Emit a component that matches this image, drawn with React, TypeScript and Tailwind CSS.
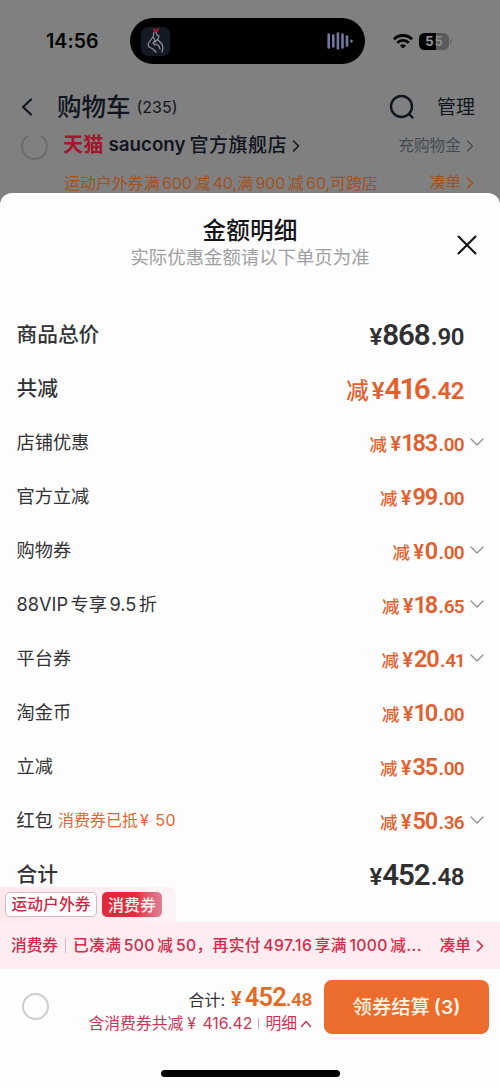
import clsx from "clsx";

type Row = {
  label: string;
  note?: boolean;
  whole: string;
  cents: string;
  discount?: boolean;
  large?: boolean;
  expandable?: boolean;
};

const rows: Row[] = [
  { label: "商品总价", whole: "868", cents: "90", large: true },
  { label: "共减", whole: "416", cents: "42", large: true, discount: true },
  { label: "店铺优惠", whole: "183", cents: "00", discount: true, expandable: true },
  { label: "官方立减", whole: "99", cents: "00", discount: true },
  { label: "购物券", whole: "0", cents: "00", discount: true, expandable: true },
  { label: "88VIP专享9.5折", whole: "18", cents: "65", discount: true, expandable: true },
  { label: "平台券", whole: "20", cents: "41", discount: true, expandable: true },
  { label: "淘金币", whole: "10", cents: "00", discount: true },
  { label: "立减", whole: "35", cents: "00", discount: true },
  { label: "红包", note: true, whole: "50", cents: "36", discount: true, expandable: true },
  { label: "合计", whole: "452", cents: "48", large: true },
];

type ChevronProps = { d: string; className: string; box: string; width?: number };

function Chevron({ d, className, box, width = 1.6 }: ChevronProps) {
  return (
    <svg viewBox={box} className={className} fill="none" stroke="currentColor" strokeWidth={width} strokeLinecap="round" strokeLinejoin="round">
      <path d={d} />
    </svg>
  );
}

// Adds a small gap wherever Chinese text meets digits or latin letters.
function Mixed({ text }: { text: string }) {
  const parts = text.split(/([0-9A-Za-z.]*[0-9A-Za-z])/).filter(Boolean);
  return (
    <>
      {parts.map((part, index) => (
        <span
          key={index}
          className={clsx(
            /^[0-9A-Za-z]/.test(part) && index > 0 && "ml-[2.5px]",
            /^[0-9A-Za-z]/.test(part) && index < parts.length - 1 && !/^[,，]/.test(parts[index + 1]) && "mr-[2.5px]"
          )}
        >
          {part}
        </span>
      ))}
    </>
  );
}

// The figure 1 is set tighter than the other digits.
function Digits({ value }: { value: string }) {
  return (
    <>
      {value.split("").map((digit, index) => (
        <span key={index} className={digit === "1" ? "-ml-[0.03em] -mr-[0.05em]" : undefined}>
          {digit}
        </span>
      ))}
    </>
  );
}

function StatusBar() {
  return (
    <div className="flex h-[82px] items-center pl-[46px] text-black">
      <span className="w-[84px] pt-px text-[19.5px] font-semibold leading-none tracking-[0.1px]">14:56</span>
      <div className="flex h-[46px] w-[235px] items-center justify-between rounded-full bg-black pl-[11px] pr-[12px]">
        <div className="flex size-[29px] items-center justify-center rounded-[7px] bg-[#151925]">
          <svg viewBox="0 0 29 29" className="size-[29px]" fill="none" strokeLinecap="round" strokeLinejoin="round">
            <path
              d="M13 5l-1 5-3 4-2 3 1 3 4 2 3 3M15 5l1 3 2 1-1 3M12 10l2 3-2 3 2 2M17 12l-3 3M17 13l4 4 1 4-1 4M15 17l3 2 1 3"
              stroke="#90939a"
              strokeWidth="1.2"
            />
            <path d="M13 2.500l1.500 2 2.500-2" stroke="#9c1f2b" strokeWidth="2.4" />
          </svg>
        </div>
        <svg viewBox="0 0 26 18" className="h-[18px] w-[26px]" stroke="#7378a0" strokeWidth="2.600" strokeLinecap="round">
          <path d="M1.700 2.500v13M6.300 3.500v11M10.900 1.500v15M15.500 2.500v13M20 4.500v9M24.500 8.700v.6" />
        </svg>
      </div>
      <svg viewBox="0 0 20 15" className="ml-[28px] h-[15px] w-[20px]" fill="none" stroke="currentColor" strokeWidth="2.800">
        <path d="M1 5.200a12.800 12.800 0 0 1 18 0M4.300 8.700a8 8 0 0 1 11.400 0" />
        <path d="M10 14.600l-3-3a4.300 4.300 0 0 1 6 0z" fill="currentColor" stroke="none" />
      </svg>
      <div className="ml-[6px] flex h-[17px] w-[30px] items-center justify-center gap-[1px] rounded-[5.5px] bg-linear-to-r from-black from-55% to-[#5a5a5a] to-55% text-[13px] font-bold leading-none">
        <span className="text-[#9a9a9a]">5</span>
        <span className="text-[#8c8c8c]">5</span>
      </div>
      <div className="ml-px h-[5px] w-[1.500px] rounded-r bg-[#696969]" />
    </div>
  );
}

function CartHeader() {
  return (
    <div className="h-[193px] overflow-hidden bg-[#808080] text-[#111520]">
      <StatusBar />
      <div className="flex h-[50px] items-center pl-[21px] pr-[25px]">
        <Chevron box="0 0 12 18" d="M10 1.500L2 9l8 7.500" className="h-[18px] w-[12px]" width={2.2} />
        <h1 className="ml-[24px] text-[24.500px] font-medium leading-none">购物车</h1>
        <span className="ml-[6px] text-[16px] leading-none">(235)</span>
        <svg viewBox="0 0 26 26" className="ml-auto size-[26px]" fill="none" stroke="currentColor" strokeWidth="2.400" strokeLinecap="round">
          <circle cx="12.500" cy="12.500" r="10.500" />
          <path d="M20 20l3.500 3.500" />
        </svg>
        <span className="ml-[22px] text-[19px] leading-none">管理</span>
      </div>
      <div className="-mt-px flex h-[29px] items-center pl-[21px] pr-[26px]">
        <div className="mt-[5px] flex h-[24px] items-center overflow-hidden pb-[4px]">
          <span className="size-[27px] shrink-0 rounded-full border-[2.500px] border-[#6b6c70]" />
        </div>
        <span className="ml-[15px] text-[20.200px] font-bold leading-none text-[#a5152c]">天猫</span>
        <span className="ml-[5px] text-[18.800px] font-semibold leading-none">saucony</span>
        <span className="ml-[4px] text-[19px] font-medium leading-none tracking-[0.5px]">官方旗舰店</span>
        <Chevron box="0 0 8 12" d="M1.500 1l5 5-5 5" className="ml-[5px] h-[12px] w-[8px]" />
        <span className="ml-auto text-[15.700px] leading-none text-[#444a55]">充购物金</span>
        <Chevron box="0 0 8 12" d="M1.500 1l5 5-5 5" className="ml-[5px] h-[12px] w-[8px] text-[#444a55]" width={1.2} />
      </div>
      <div className="flex h-[46px] items-center pl-[64px] pr-[26px] text-[16px] leading-none text-[#a1521f]">
        <span className="whitespace-nowrap tracking-[-0.100px]">
          <Mixed text="运动户外券满600减40,满900减60,可跨店" />
        </span>
        <span className="ml-auto text-[15.500px]">凑单</span>
        <Chevron box="0 0 8 12" d="M1.500 1l5 5-5 5" className="ml-[5px] h-[12px] w-[8px]" />
      </div>
    </div>
  );
}

function Price({ whole, cents, large, discount }: Row) {
  return (
    <div
      className={clsx(
        "flex items-baseline font-['Roboto','Noto_Sans_CJK_SC',sans-serif] leading-none font-semibold",
        discount ? "text-[#e2602e]" : "text-[#303033]"
      )}
    >
      {discount ? (
        <span className={large ? "mr-[3px] text-[22.500px] font-medium" : "mr-[3.500px] text-[17.500px] font-medium"}>减</span>
      ) : null}
      <span className={large ? "text-[24px]" : "mr-px text-[19.500px]"}>¥</span>
      <span className={large ? "text-[29.500px] tracking-[-1.100px]" : "text-[23.500px] tracking-[-1px]"}>
        <Digits value={whole} />
      </span>
      <span className={large ? "text-[24px] tracking-[-0.5px]" : "text-[19px] tracking-[-0.7px]"}>
        <span className="mr-[0.5px] ml-[1.200px]">.</span>
        <Digits value={cents} />
      </span>
    </div>
  );
}

function DetailRow(row: Row) {
  return (
    <li className="flex h-[54px] items-center pl-[16.500px]">
      <span
        className={clsx(
          "leading-none text-[#333336]",
          row.large ? "pt-[2px] text-[20.700px] font-medium" : "text-[18.200px]"
        )}
      >
        <Mixed text={row.label} />
      </span>
      {row.note ? (
        <span className="ml-[5px] text-[16px] leading-none text-[#e2652f]">
          消费券已抵<span className="ml-[2px] mr-[2px]">¥</span> <span className="tracking-[0.500px]">50</span>
        </span>
      ) : null}
      <div className="ml-auto pt-[3px]">
        <Price {...row} />
      </div>
      <div className="w-[36px] pl-[6px]">
        {row.expandable ? (
          <Chevron box="0 0 14 8" d="M1 1l6 6 6-6" className="h-[8px] w-[14px] text-[#8e8e93]" width={1.3} />
        ) : null}
      </div>
    </li>
  );
}

function CouponBar() {
  return (
    <div className="relative -mt-[14px] shrink-0">
      <div className="flex h-[35px] w-[176px] items-center gap-[5px] rounded-tr-[7px] bg-linear-to-r from-[#fde8ec] to-[#fdf2f4] pl-[5px] leading-none">
        <span className="flex h-[25px] w-[92px] items-center justify-center rounded-[5px] border border-[#dcb6c5] bg-white text-[15.800px] font-medium text-[#cf2744]">
          运动户外券
        </span>
        <span className="flex h-[25px] w-[60px] items-center justify-center rounded-[5px] bg-linear-to-r from-[#e02a3c] from-55% to-[#df7f98] text-[16px] font-medium text-[#fff0f0]">
          消费券
        </span>
      </div>
      <div className="flex h-[47px] items-center bg-[#fdedf0] pl-[11px] pr-[16px] text-[15.700px] font-medium leading-none text-[#d42a49]">
        <span>消费券</span>
        <span className="mx-[7px] h-[15px] w-px bg-[#e2b5c0]" />
        <span className="whitespace-nowrap tracking-[0.380px]">
          <Mixed text="已凑满500减50，再实付497.16享满1000减..." />
        </span>
        <span className="ml-auto">凑单</span>
        <Chevron box="0 0 8 12" d="M1.500 1l5 5-5 5" className="ml-[5px] h-[12px] w-[8px]" />
      </div>
    </div>
  );
}

function CheckoutBar() {
  return (
    <footer className="flex h-[118px] flex-col bg-[#fdfdfd]">
      <div className="flex items-start pl-[21.500px] pt-[11px]">
        <span className="mt-[13px] size-[27px] rounded-full border-[2.500px] border-[#ccccd1]" />
        <div className="ml-auto mr-[12px] flex flex-col items-end pt-[5px]">
          <div className="flex h-[31px] items-baseline text-[#303033]">
            <span className="mr-[6px] text-[16px]">合计:</span>
            <span className="flex items-baseline font-['Roboto',sans-serif] font-semibold leading-none text-[#e56a25]">
              <span className="mr-[3px] text-[20px]">¥</span>
              <span className="text-[25.500px] tracking-[-0.8px]">452</span>
              <span className="text-[19px] tracking-[-0.4px]">.48</span>
            </span>
          </div>
          <div className="flex items-center text-[15.800px] leading-none text-[#c93556]">
            <span className="whitespace-nowrap">
              含消费券共减<span className="ml-[4px] mr-[2px]">¥</span> 416.42
            </span>
            <span className="mx-[6px] h-[11px] w-px bg-[#d9a0b0]" />
            <span>明细</span>
            <Chevron box="0 0 12 8" d="M1.500 6.500l4.500-5 4.500 5" className="ml-[3px] h-[8px] w-[12px]" width={1.4} />
          </div>
        </div>
        <button type="button" className="mr-[11px] h-[54px] w-[165px] rounded-[8px] bg-[#ec6c2d] pt-[2px] text-[19.300px] font-medium leading-none text-[#fff4e4]">
          领券结算<span className="ml-[4px] font-semibold">(3)</span>
        </button>
      </div>
      <div className="mx-auto mb-[10px] mt-auto h-[7px] w-[179px] rounded-full bg-black" />
    </footer>
  );
}

export default function App() {
  return (
    <div className="flex h-[1087px] w-[500px] flex-col overflow-hidden bg-[#808080] font-['Inter','Noto_Sans_CJK_SC',sans-serif]">
      <CartHeader />
      <main className="flex h-[894px] flex-col rounded-t-[12px] bg-[#fdfdfd]">
        <div className="relative flex h-[114px] flex-col items-center pt-[26px]">
          <h2 className="text-[23.700px] font-medium leading-none text-[#151518]">金额明细</h2>
          <p className="mt-[5px] text-[18.400px] leading-none text-[#a0a0a3]">实际优惠金额请以下单页为准</p>
          <svg viewBox="0 0 20 20" className="absolute right-[23px] top-[42px] size-[20px]" fill="none" stroke="#111" strokeWidth="2.100" strokeLinecap="round">
            <path d="M1.500 1.500l17 17M18.500 1.500l-17 17" />
          </svg>
        </div>
        <ul className="shrink-0">
          {rows.map((row) => (
            <DetailRow key={row.label} {...row} />
          ))}
        </ul>
        <CouponBar />
        <CheckoutBar />
      </main>
    </div>
  );
}
